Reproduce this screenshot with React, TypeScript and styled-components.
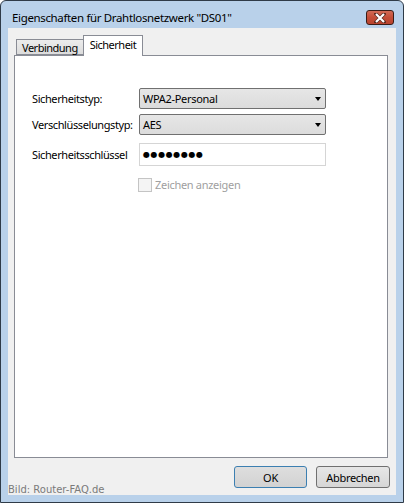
import * as React from 'react';
import styled, { createGlobalStyle } from 'styled-components';

const GlobalStyle = createGlobalStyle`
  html, body {
    margin: 0;
    padding: 0;
    background: #ffffff;
  }
  body {
    font-family: 'Noto Sans', 'Liberation Sans', sans-serif;
    font-size: 11px;
    letter-spacing: -0.3px;
    color: #000000;
  }
`;

const Window = styled.div`
  box-sizing: border-box;
  width: 404px;
  height: 503px;
  border: 1px solid #2f3b48;
  border-radius: 6px 6px 0 0;
  background: #b9d1ea;
  display: flex;
  flex-direction: column;
  padding: 0 7px 7px 7px;
`;

const TitleBar = styled.div`
  height: 27px;
  display: flex;
  align-items: flex-start;
  justify-content: space-between;
  padding: 9px 2px 0 4px;
  box-sizing: border-box;
`;

const TitleText = styled.span`
  font-size: 11.5px;
  line-height: 15px;
  letter-spacing: -0.35px;
  color: #000000;
`;

const CloseButton = styled.div`
  box-sizing: border-box;
  width: 28px;
  height: 15px;
  border: 1px solid #3a1c16;
  border-radius: 3px;
  background: linear-gradient(#d26a55, #c44d37 50%, #b9432e);
  display: flex;
  align-items: center;
  justify-content: center;
`;

const Content = styled.div`
  flex: 1;
  background: #f0f0f0;
  display: flex;
  flex-direction: column;
  padding: 7px 8px 0 6px;
`;

const TabStrip = styled.div`
  height: 20px;
  display: flex;
  align-items: flex-end;
  padding-left: 2px;
  position: relative;
  z-index: 1;
`;

const Tab = styled.div<{ $active?: boolean }>`
  box-sizing: border-box;
  height: ${(p) => (p.$active ? '21px' : '16px')};
  margin-bottom: ${(p) => (p.$active ? '-1px' : '0')};
  padding: ${(p) => (p.$active ? '2px 6px 0 6px' : '1px 5px 0 5px')};
  border: 1px solid #898c95;
  border-bottom: ${(p) => (p.$active ? 'none' : '1px solid #898c95')};
  border-right: ${(p) => (p.$active ? '1px solid #898c95' : 'none')};
  background: ${(p) => (p.$active ? '#ffffff' : 'linear-gradient(#ececec, #dcdcdc)')};
  line-height: 14px;
  letter-spacing: -0.5px;
  white-space: nowrap;
`;

const Panel = styled.div`
  box-sizing: border-box;
  height: 403px;
  border: 1px solid #898c95;
  background: #ffffff;
  padding: 32px 0 0 17px;
  display: flex;
  flex-direction: column;
`;

const Row = styled.div<{ $top: number }>`
  display: flex;
  align-items: center;
  margin-top: ${(p) => p.$top}px;
`;

const Label = styled.span`
  width: 107px;
  letter-spacing: -0.4px;
  white-space: nowrap;
`;

const Select = styled.div`
  box-sizing: border-box;
  width: 187px;
  height: 21px;
  border: 1px solid #707070;
  border-radius: 2px;
  background: linear-gradient(#e6e6e6, #dcdcdc);
  display: flex;
  align-items: center;
  justify-content: space-between;
  padding: 0 4px 0 3px;
`;

const Arrow = styled.span`
  width: 0;
  height: 0;
  border-left: 3.5px solid transparent;
  border-right: 3.5px solid transparent;
  border-top: 4px solid #000000;
  margin-top: 1px;
`;

const TextField = styled.div`
  box-sizing: border-box;
  width: 187px;
  height: 23px;
  border: 1px solid #d5d5d5;
  background: #ffffff;
  display: flex;
  align-items: center;
  padding-left: 3px;
`;

const Dots = styled.span`
  font-family: 'DejaVu Sans', sans-serif;
  font-size: 8px;
  letter-spacing: 0.6px;
  line-height: 10px;
`;

const CheckRow = styled.div`
  display: flex;
  align-items: center;
  margin: 11px 0 0 106px;
`;

const CheckBox = styled.span`
  box-sizing: border-box;
  width: 14px;
  height: 14px;
  border: 1px solid #c4c4c4;
  background: #f4f4f4;
  margin-right: 3px;
`;

const CheckLabel = styled.span`
  color: #a0a0a0;
`;

const Footer = styled.div`
  flex: 1;
  display: flex;
  justify-content: space-between;
  align-items: flex-start;
  margin: 0 -2px 0 -6px;
  padding-top: 8px;
`;

const Credit = styled.span`
  font-family: 'DejaVu Sans', sans-serif;
  font-size: 10px;
  letter-spacing: 0;
  color: #7a7a7a;
  margin-top: 18px;
`;

const Buttons = styled.div`
  display: flex;
  gap: 9px;
`;

const Button = styled.div<{ $default?: boolean; $width: number }>`
  box-sizing: border-box;
  width: ${(p) => p.$width}px;
  height: 22px;
  border: 1px solid ${(p) => (p.$default ? '#3c7fb1' : '#707070')};
  border-radius: 3px;
  background: ${(p) =>
    p.$default ? 'linear-gradient(#dedede, #d2d2d2)' : 'linear-gradient(#e6e6e6, #d6d6d6)'};
  display: flex;
  align-items: center;
  justify-content: center;
`;

export default function App(): JSX.Element {
  return (
    <>
      <GlobalStyle />
      <Window>
        <TitleBar>
          <TitleText>Eigenschaften für Drahtlosnetzwerk "DS01"</TitleText>
          <CloseButton>
            <svg width="12" height="10" viewBox="0 0 12 10">
              <path
                d="M2 1 L10 9 M10 1 L2 9"
                stroke="#5a2a20"
                strokeWidth="3.6"
                strokeLinecap="square"
              />
              <path d="M2 1 L10 9 M10 1 L2 9" stroke="#ffffff" strokeWidth="2.2" />
            </svg>
          </CloseButton>
        </TitleBar>
        <Content>
          <TabStrip>
            <Tab>Verbindung</Tab>
            <Tab $active>Sicherheit</Tab>
          </TabStrip>
          <Panel>
            <Row $top={0}>
              <Label>Sicherheitstyp:</Label>
              <Select>
                <span>WPA2-Personal</span>
                <Arrow />
              </Select>
            </Row>
            <Row $top={5}>
              <Label>Verschlüsselungstyp:</Label>
              <Select>
                <span>AES</span>
                <Arrow />
              </Select>
            </Row>
            <Row $top={8}>
              <Label>Sicherheitsschlüssel</Label>
              <TextField>
                <Dots>●●●●●●●●</Dots>
              </TextField>
            </Row>
            <CheckRow>
              <CheckBox />
              <CheckLabel>Zeichen anzeigen</CheckLabel>
            </CheckRow>
          </Panel>
          <Footer>
            <Credit>Bild: Router-FAQ.de</Credit>
            <Buttons>
              <Button $default $width={73}>OK</Button>
              <Button $width={74}>Abbrechen</Button>
            </Buttons>
          </Footer>
        </Content>
      </Window>
    </>
  );
}
